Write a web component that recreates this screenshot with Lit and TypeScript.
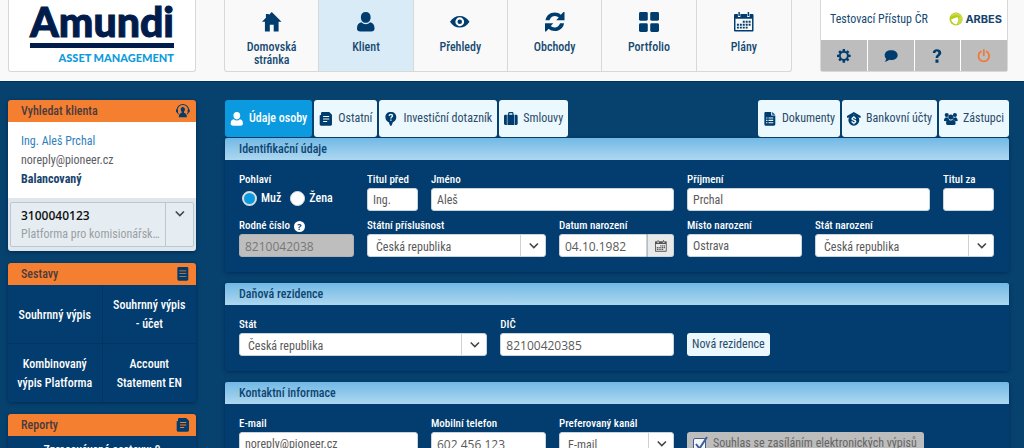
import { LitElement, html, svg, css, nothing, TemplateResult, SVGTemplateResult } from "lit";
import { customElement, state } from "lit/decorators.js";
import { classMap } from "lit/directives/class-map.js";

const icons: Record<string, SVGTemplateResult> = {
  home: svg`<path d="M10 0 20 10h-3v10h-5v-7H8v7H3V10H0L4 6V2h3v1z"/>`,
  person: svg`<path d="M10 0c3.300 0 5 2 5 5.300S13 11 10 11 5 8.600 5 5.300 6.700 0 10 0zM5.500 10.500a6 6 0 0 0 9 0c3 .6 4.500 2.500 4.500 6.500 0 2-1.200 3-3.500 3h-11C2.200 20 1 19 1 17c0-4 1.500-5.900 4.500-6.500z"/>`,
  eye: svg`<path fill-rule="evenodd" d="M0 10c2.500-4 6-6 10-6s7.500 2 10 6c-2.500 4-6 6-10 6s-7.500-2-10-6zm10-4.500a4.500 4.500 0 1 0 0 9 4.500 4.500 0 0 0 0-9z"/><circle cx="10" cy="10" r="2.300"/>`,
  refresh: svg`<path d="M.5 8.500C1.200 3.800 4.800.5 10 .5c2.600 0 4.600.9 6.200 2.300L19 0h1v8.500h-8.500l2.600-2.800A5.800 5.800 0 0 0 4.600 8.500zM19.500 11.500c-.7 4.700-4.300 8-9.500 8-2.600 0-4.600-.9-6.200-2.300L1 20H0v-8.500h8.500l-2.600 2.800a5.800 5.800 0 0 0 9.500-2.800z"/>`,
  grid: svg`<rect width="9" height="9" rx="1.500"/><rect x="11.500" width="9" height="9" rx="1.500"/><rect y="11.500" width="9" height="9" rx="1.500"/><rect x="11.500" y="11.500" width="9" height="9" rx="1.500"/>`,
  calendar: svg`<path fill-rule="evenodd" d="M1 2h3v3h2.500V2h7v3H16V2h3c.6 0 1 .4 1 1v16c0 .6-.4 1-1 1H1c-.6 0-1-.4-1-1V3c0-.6.4-1 1-1zm.5 5v11.500h17V7z"/><path d="M4.500 0h1.500v4H4.500zM14 0h1.500v4H14zM9 9h2v2H9zM12 9h2v2h-2zM15 9h2v2h-2zM3 12h2v2H3zM6 12h2v2H6zM9 12h2v2H9zM12 12h2v2h-2zM15 12h2v2h-2zM3 15h2v2H3zM6 15h2v2H6zM9 15h2v2H9zM12 15h2v2h-2z"/>`,
  gear: svg`<circle cx="10" cy="10" r="5.800" fill="none" stroke="currentColor" stroke-width="2.600"/><path d="M8.300 0h3.400l.5 4H7.800zM8.300 20h3.400l.5-4H7.800zM0 8.300v3.400l4 .5V7.800zM20 8.300v3.400l-4 .5V7.800zM1.900 4.300l2.400-2.400 3 2.300-3.100 3.100zM15.700 1.900l2.400 2.400-2.300 3-3.100-3.100zM1.900 15.700l2.400 2.400 3-2.300-3.100-3.100zM15.700 18.100l2.400-2.400-2.300-3-3.100 3.100z"/>`,
  chat: svg`<path d="M10.500 2C16 2 20 5 20 9s-4 7-9.500 7c-1 0-2-.1-2.900-.3C5.800 17.300 3.500 18.500 1 18.500c1.300-1.300 2.100-2.700 2.200-4.400C1.800 12.800 1 11 1 9c0-4 4-7 9.500-7z"/>`,
  help: svg`<path d="M4 6C4 2.300 6.500.2 10.200.2S16.500 2.300 16.500 5.500c0 4.300-4.300 4.500-4.300 7.500H8.300c0-4.600 3.900-4.900 3.900-7.300 0-1.200-.8-2-2.100-2S7.900 4.600 7.900 6zM8 15.500h4.400V20H8z"/>`,
  power: svg`<path d="M5.800 3.800a7.800 7.800 0 1 0 8.400 0" fill="none" stroke="currentColor" stroke-width="2.600" stroke-linecap="round"/><path d="M10 1.300v8" stroke="currentColor" stroke-width="2.600" stroke-linecap="round"/>`,
  support: svg`<path d="M3.500 15A8.600 8.600 0 1 1 16.500 15" fill="none" stroke="currentColor" stroke-width="1.500"/><path d="M0 8h3v4H0zM17 8h3v4h-3zM10 4.500c2 0 3.100 1.300 3.100 3.500 0 1.500-.6 2.600-1.400 3.300v1.500c2.300.6 4.300 2.200 4.300 6.700H4c0-4.500 2-6.100 4.300-6.700v-1.500C7.500 10.600 6.900 9.500 6.900 8c0-2.200 1.100-3.500 3.100-3.500z"/>`,
  report: svg`<path fill-rule="evenodd" d="M4 0h12c1.200 0 2 .8 2 2v16c0 1.200-.8 2-2 2H4c-1.200 0-2-.8-2-2V2c0-1.200.8-2 2-2zm1 5v1.400h10V5zm0 4v1.400h10V9zm0 4v1.400h10V13z"/>`,
  pages: svg`<path fill-rule="evenodd" d="M5 0h10l4 4v14c0 1.200-.8 2-2 2H3c-1.200 0-2-.8-2-2V5l2-1V2c0-1.200.8-2 2-2zm1 6v1.500h9V6zm0 3.500V11h9V9.500zM6 13v1.500h6V13z"/>`,
  question: svg`<path fill-rule="evenodd" d="M10 0c5 0 8 3 8 7.600 0 4-2.500 6.400-5 7.400l-2 5h-2l-2-5c-2.500-1-5-3.400-5-7.400C2 3 5 0 10 0zM6.800 6h2c0-1 .4-1.600 1.300-1.600.7 0 1.200.4 1.200 1.200 0 1.400-2.200 1.700-2.200 4h2c0-1.600 2.300-2 2.300-4.100 0-1.800-1.300-2.900-3.300-2.900S6.800 3.900 6.800 6zm2.300 4.800v2h2v-2z"/>`,
  case: svg`<path fill-rule="evenodd" d="M6 4V2.200C6 1 6.800 0 8 0h4c1.200 0 2 1 2 2.200V4h1v15H5V4zm1.800 0h4.400V2H7.800zM2 4h2.200v15H2c-1.200 0-2-.8-2-2V6c0-1.200.8-2 2-2zm13.800 0H18c1.200 0 2 .8 2 2v11c0 1.200-.8 2-2 2h-2.200z"/>`,
  document: svg`<path fill-rule="evenodd" d="M4 0h8v5h6v13c0 1.200-.8 2-2 2H4c-1.200 0-2-.8-2-2V2c0-1.200.8-2 2-2zm.5 8v1.600h2V8zm3.500 0v1.600h7V8zm-3.500 3.500v1.600h2v-1.600zm3.500 0v1.600h7v-1.600zM4.500 15v1.600h2V15zM8 15v1.600h7V15z"/><path d="M13.500 0 18 4h-4.500z"/>`,
  bank: svg`<path d="M10 0 20 6v2.500h-2L10 3.500 2 8.500H0V6z"/><path fill-rule="evenodd" d="M10 4a8 8 0 1 1 0 16 8 8 0 0 1 0-16zM9.200 6v1.300C7.500 7.500 6.500 8.600 6.500 10c0 3.400 4.800 2.300 4.800 4 0 .6-.5.900-1.300.9-1 0-1.600-.5-1.700-1.400H6.200c.1 1.700 1.200 2.900 3 3.200V18h1.700v-1.300c1.800-.2 2.800-1.300 2.800-2.900 0-3.500-4.900-2.400-4.900-4 0-.5.400-.9 1.200-.9s1.300.5 1.400 1.200h2.100c-.1-1.500-1-2.500-2.600-2.800V6z"/>`,
  people: svg`<circle cx="4" cy="4.500" r="3"/><circle cx="16" cy="4.500" r="3"/><circle cx="10" cy="7.500" r="3.700"/><path d="M0 13c0-3 1-4.500 3-5.200 1.200.7 2 .7 3-.1.300 1.500.8 2.600 1.700 3.500-1.900.3-3 .9-3.700 2.300zM20 13c0-3-1-4.500-3-5.200-1.200.7-2 .7-3-.1-.3 1.500-.8 2.600-1.700 3.500 1.900.3 3 .9 3.700 2.300zM6.500 11.500c2 1.400 5 1.400 7 0 2.300.6 3.500 2.300 3.500 5.500 0 1.200-1 2-2.200 2H5.200C4 19 3 18.200 3 17c0-3.200 1.200-4.900 3.500-5.500z"/>`,
  chevron: svg`<path d="m3 6 7 7 7-7" fill="none" stroke="currentColor" stroke-width="2.600"/>`,
};

const icon = (name: string, size = "m") =>
  html`<svg class="icon ${size}" viewBox="0 0 20.500 20.500" aria-hidden="true">${icons[name]}</svg>`;

@customElement("app-root")
export class AppRoot extends LitElement {
  @state() private page = "Klient";
  @state() private tab = "Údaje osoby";

  static styles = css`
    :host {
      display: block;
      min-height: 100vh;
      background: #07426f;
      color: #fff;
      font: 12px/19px "Roboto Condensed", "Liberation Sans Narrow", Roboto, sans-serif;
      --navy: #003d6e;
      --panel: #033c6e;
      --orange: #f47f30;
      --ice: #ebf8fe;
      --wide: "Open Sans", "Noto Sans", sans-serif;
    }
    * { box-sizing: border-box; }
    button, input, select { font: inherit; color: inherit; margin: 0; }
    button { border: 0; padding: 0; background: none; cursor: pointer; }
    h2 { margin: 0; font: inherit; }
    a { color: inherit; text-decoration: none; }
    .icon { fill: currentColor; color: var(--navy); flex: none; display: block; }
    .l { width: 20px; height: 20px; }
    .m { width: 14px; height: 14px; }
    .s { width: 12px; height: 12px; }

    header {
      display: grid;
      grid-template-columns: 188px minmax(0, 1fr) 188px;
      column-gap: 28px;
      padding: 0 16px 9px 8px;
      background: #f9f9f9;
      color: #164a72;
      border-bottom: 1px solid #00335c;
    }
    .box { border: 1px solid #d8d8d8; border-top: 0; border-radius: 0 0 3px 3px; height: 72px; }
    .logo { background: #fff; display: flex; flex-direction: column; align-items: flex-end; padding-right: 21px; font-family: Lato, sans-serif; font-weight: 900; }
    .brand { color: #001c4b; font-size: 41px; line-height: 43px; -webkit-text-stroke: 1px #001c4b; }
    .bar { width: 144px; height: 5px; background: #001c4b; }
    .sub { color: #0e9bdc; font-size: 11px; line-height: 19px; }
    nav { display: grid; grid-template-columns: repeat(6, 1fr); }
    nav a { display: flex; flex-direction: column; align-items: center; gap: 9px; padding-top: 12px; line-height: 13px; font-weight: 500; text-align: center; border-right: 1px solid #d8d8d8; }
    nav a:last-child { border: 0; }
    nav a span { max-width: 70px; font-size: 12px; }
    nav a.on { background: #d9ebf7; }
    .user { display: flex; flex-direction: column; background: #fff; }
    .who { display: flex; justify-content: space-between; align-items: center; height: 40px; padding: 0 5px 2px 9px; white-space: nowrap; }
    .arbes { display: flex; align-items: center; gap: 2px; font: 700 11px/14px Inter, sans-serif; color: #17446c; }
    .tools { display: grid; grid-template-columns: repeat(4, 1fr); gap: 1px; flex: 1; }
    .tools button { background: #bdbdbd; display: grid; place-items: center; }
    .tools .off .icon { color: #f0793a; }

    main { display: grid; grid-template-columns: 188px minmax(0, 1fr); column-gap: 29px; padding: 18px 15px 12px 8px; }
    aside { display: flex; flex-direction: column; gap: 12px; }
    .card { border-radius: 3px; overflow: hidden; box-shadow: 0 1px 4px #00284f; background: var(--panel); }
    .card h2 { display: flex; align-items: center; justify-content: space-between; height: 22px; padding: 0 6px 0 13px; background: var(--orange); color: #4b3b3f; font-weight: 500; }
    .client { background: #fff; padding: 10px 13px 9px; color: #5c5c64; height: 76px; }
    .client div { white-space: nowrap; }
    .client a { color: #2f7fc0; }
    .client strong { color: #17446c; }
    .acct { background: #dfe7ec; padding: 4px 2px; }
    .acct button { display: grid; grid-template-columns: minmax(0, 1fr) 27px; width: 100%; height: 45px; border: 1px solid #bcc8d0; border-radius: 2px; background: #e6edf2; text-align: left; }
    .acct .txt { padding: 3px 4px 3px 10px; border-right: 1px solid #bcc8d0; }
    .acct .txt span { display: block; overflow: hidden; text-overflow: ellipsis; white-space: nowrap; color: #9b9fa3; }
    .acct .txt .num { font: 600 12px/19px var(--wide); color: #111; }
    .acct .icon { margin: 5px auto; color: #444; }
    .links { display: grid; grid-template-columns: 1fr 1fr; gap: 1px; background: #02355f; }
    .links a { display: grid; place-items: center; text-align: center; height: 58px; padding: 2px 8px 0; background: var(--panel); font-weight: 500; }
    .queue { text-align: center; padding: 5px; font-weight: 500; }

    .tabs { display: flex; gap: 2px; }
    .tabs button { display: flex; align-items: center; gap: 5px; height: 37px; padding: 0 5px; border-radius: 3px; background: var(--ice); color: #2b4a68; white-space: nowrap; }
    .tabs button.on { background: #0b9ae0; color: #fff; font-weight: 500; }
    .tabs button.on .icon { color: #fff; }
    .gap { flex: 1; }
    section { background: var(--panel); box-shadow: 0 1px 4px #002c55; margin: 0 0 11px; border-radius: 2px; }
    .tabs + section { margin-top: 1px; }
    section h2 { height: 22px; line-height: 22px; padding: 0 14px; color: #0f456f; font-weight: 500; background: linear-gradient(#72b9e5, #add7f0); border-radius: 2px 2px 0 0; }
    .form { display: grid; grid-template-columns: repeat(12, minmax(0, 1fr)); gap: 7px 13px; padding: 12px 15px 15px 14px; align-items: end; }
    .tax { display: grid; grid-template-columns: repeat(12, minmax(0, 1fr)); column-gap: 13px; }
    .w1 { grid-column: span 1; }
    .w2 { grid-column: span 2; }
    .w3 { grid-column: span 3; }
    .w4 { grid-column: span 4; }
    .w5 { grid-column: span 5; }
    .w7 { grid-column: span 7; }
    .cap { display: flex; align-items: center; gap: 4px; height: 16px; font-size: 11px; line-height: 16px; font-weight: 500; white-space: nowrap; padding: 0; }
    .mark { width: 11px; height: 11px; border-radius: 50%; background: #fff; color: var(--navy); font: 700 9px/11px var(--wide); text-align: center; }
    .in { width: 100%; height: 23px; border: 1px solid #c9d3da; border-radius: 3px; background: #fff; color: #5a5a5a; padding: 1px 5px 0; display: block; }
    .in.num { font-family: var(--wide); }
    .in:disabled { background: #bebebe; color: #777; border-color: #b0b0b0; opacity: 1; }
    .pick { display: grid; grid-template-columns: minmax(0, 1fr) 26px; align-items: center; }
    .pick .in { grid-area: 1 / 1 / 2 / 3; appearance: none; padding: 3px 30px 0 8px; }
    .pick .cue { grid-area: 1 / 2; height: 21px; border-left: 1px solid #ccd2d6; display: grid; place-items: center; pointer-events: none; z-index: 1; }
    .cue .icon { color: #444; }
    .date { display: grid; grid-template-columns: minmax(0, 1fr) 27px; }
    .date .in { border-radius: 3px 0 0 3px; }
    .date button { background: #e9e9e9; border: 1px solid #c9d3da; border-left-color: #bbb; border-radius: 0 3px 3px 0; display: grid; place-items: center; }
    .date .icon { color: #555; }
    fieldset { border: 0; margin: 0; padding: 0; min-width: 0; }
    .radios { display: flex; gap: 9px; height: 23px; align-items: center; padding: 0 0 3px 3px; font-weight: 500; }
    .radios label { display: flex; align-items: center; gap: 4px; }
    .radios input { appearance: none; width: 15px; height: 15px; border: 1px solid #d8e0e6; border-radius: 50%; background: #fff; }
    .radios input:checked { background: #0b9ae0; border: 2px solid #dcdcdc; }
    .add { height: 23px; border-radius: 3px; background: var(--ice); color: #2b4a68; grid-column: span 5; justify-self: start; padding: 0 5px; }
    .consent { grid-column: span 5; justify-self: start; display: flex; align-items: center; gap: 5px; height: 23px; padding: 0 7px 0 6px; background: #bdbdbd; border-radius: 3px; color: #666; white-space: nowrap; }
    .tick { display: grid; width: 15px; height: 17px; }
    .tick input { appearance: none; grid-area: 1 / 1; width: 13px; height: 13px; margin: 3px 0 0; border: 1px solid #3d5f96; border-radius: 2px; background: #f6f6f6; }
    .tick svg { grid-area: 1 / 1; width: 15px; height: 17px; pointer-events: none; z-index: 1; }
  `;

  private field(id: string, label: string, width: string, control: TemplateResult, mark = false) {
    return html`<div class=${width}>
      <label class="cap" for=${id}>${label}${mark ? html`<span class="mark">?</span>` : nothing}</label>
      ${control}
    </div>`;
  }

  private text(id: string, label: string, width: string, value: string, num = false, disabled = false) {
    return this.field(id, label, width,
      html`<input class=${classMap({ in: true, num })} id=${id} type="text" .value=${value} ?disabled=${disabled} />`, disabled);
  }

  private pick(id: string, label: string, width: string, value: string) {
    return this.field(id, label, width, html`<div class="pick">
      <select class="in" id=${id}><option>${value}</option></select>
      <span class="cue">${icon("chevron", "s")}</span>
    </div>`);
  }

  private tabButton(name: string, label: string) {
    return html`<button type="button" class=${classMap({ on: this.tab === label })} @click=${() => (this.tab = label)}>
      ${icon(name)}<span>${label}</span>
    </button>`;
  }

  private navLink(name: string, label: string) {
    return html`<a href="#" class=${classMap({ on: this.page === label })} @click=${(e: Event) => { e.preventDefault(); this.page = label; }}>
      ${icon(name, "l")}<span>${label}</span>
    </a>`;
  }

  render() {
    return html`
      <header>
        <div class="box logo">
          <div class="brand">Amundi</div>
          <div class="bar"></div>
          <div class="sub">ASSET MANAGEMENT</div>
        </div>
        <nav class="box">
          ${this.navLink("home", "Domovská stránka")}
          ${this.navLink("person", "Klient")}
          ${this.navLink("eye", "Přehledy")}
          ${this.navLink("refresh", "Obchody")}
          ${this.navLink("grid", "Portfolio")}
          ${this.navLink("calendar", "Plány")}
        </nav>
        <div class="box user">
          <div class="who">
            <span>Testovací Přístup ČR</span>
            <span class="arbes">
              <svg width="14" height="14" viewBox="0 0 14 14" aria-hidden="true">
                <circle cx="7" cy="7" r="6.500" fill="#b5cc18" />
                <path d="M2 5.500C4 3 8 2.500 11 4.500L9 7c1 2 .5 4-1 5.500 4 0 6-3 5.500-6C13 3 10 .7 7 .7 4.500.7 2.500 2.500 2 5.500z" fill="#c9d94a" />
                <path d="M2 7.500 8.500 5c1.200 2.200.8 5-1 7.500C5 12 3 10.500 2 7.500z" fill="#fff" />
              </svg>ARBES</span>
          </div>
          <div class="tools">
            <button type="button" aria-label="Nastavení">${icon("gear")}</button>
            <button type="button" aria-label="Zprávy">${icon("chat")}</button>
            <button type="button" aria-label="Nápověda">${icon("help")}</button>
            <button type="button" class="off" aria-label="Odhlásit">${icon("power")}</button>
          </div>
        </div>
      </header>
      <main>
        <aside>
          <div class="card">
            <h2>Vyhledat klienta ${icon("support")}</h2>
            <div class="client">
              <div><a href="#">Ing. Aleš Prchal</a></div>
              <div>noreply@pioneer.cz</div>
              <div><strong>Balancovaný</strong></div>
            </div>
            <div class="acct">
              <button type="button" aria-haspopup="listbox">
                <span class="txt"><span class="num">3100040123</span><span>Platforma pro komisionářsk...</span></span>
                ${icon("chevron", "s")}
              </button>
            </div>
          </div>
          <div class="card">
            <h2>Sestavy ${icon("report")}</h2>
            <div class="links">
              <a href="#">Souhrnný výpis</a><a href="#">Souhrnný výpis - účet</a>
              <a href="#">Kombinovaný výpis Platforma</a><a href="#">Account Statement EN</a>
            </div>
          </div>
          <div class="card">
            <h2>Reporty ${icon("pages")}</h2>
            <div class="queue">Zpracovávané sestavy: 0</div>
          </div>
        </aside>
        <div>
          <div class="tabs">
            ${this.tabButton("person", "Údaje osoby")}
            ${this.tabButton("pages", "Ostatní")}
            ${this.tabButton("question", "Investiční dotazník")}
            ${this.tabButton("case", "Smlouvy")}
            <span class="gap"></span>
            ${this.tabButton("document", "Dokumenty")}
            ${this.tabButton("bank", "Bankovní účty")}
            ${this.tabButton("people", "Zástupci")}
          </div>
          <section>
            <h2>Identifikační údaje</h2>
            <div class="form">
              <fieldset class="w2">
                <legend class="cap">Pohlaví</legend>
                <div class="radios">
                  <label><input type="radio" name="sex" checked />Muž</label>
                  <label><input type="radio" name="sex" />Žena</label>
                </div>
              </fieldset>
              ${this.text("title", "Titul před", "w1", "Ing.")}
              ${this.text("first", "Jméno", "w4", "Aleš")}
              ${this.text("last", "Příjmení", "w4", "Prchal")}
              ${this.text("suffix", "Titul za", "w1", "")}
              ${this.text("rc", "Rodné číslo", "w2", "8210042038", true, true)}
              ${this.pick("citizen", "Státní příslušnost", "w3", "Česká republika")}
              ${this.field("born", "Datum narození", "w2", html`<div class="date">
                <input class="in num" id="born" type="text" .value=${"04.10.1982"} />
                <button type="button" aria-label="Kalendář">${icon("calendar", "s")}</button>
              </div>`)}
              ${this.text("place", "Místo narození", "w2", "Ostrava")}
              ${this.pick("country", "Stát narození", "w3", "Česká republika")}
            </div>
          </section>
          <section>
            <h2>Daňová rezidence</h2>
            <div class="form">
              <div class="tax w7">
                ${this.pick("tax", "Stát", "w7", "Česká republika")}
                ${this.text("dic", "DIČ", "w5", "82100420385", true)}
              </div>
              <button type="button" class="add">Nová rezidence</button>
            </div>
          </section>
          <section>
            <h2>Kontaktní informace</h2>
            <div class="form">
              ${this.text("mail", "E-mail", "w3", "noreply@pioneer.cz")}
              ${this.text("phone", "Mobilní telefon", "w2", "602 456 123", true)}
              ${this.pick("channel", "Preferovaný kanál", "w2", "E-mail")}
              <label class="consent">
                <span class="tick">
                  <input type="checkbox" checked />
                  <svg viewBox="0 0 15 17"><path d="m3 9 3.500 4.500L14 2" fill="none" stroke="#3d5f96" stroke-width="2" /></svg>
                </span>
                Souhlas se zasíláním elektronických výpisů
              </label>
            </div>
          </section>
        </div>
      </main>
    `;
  }
}
